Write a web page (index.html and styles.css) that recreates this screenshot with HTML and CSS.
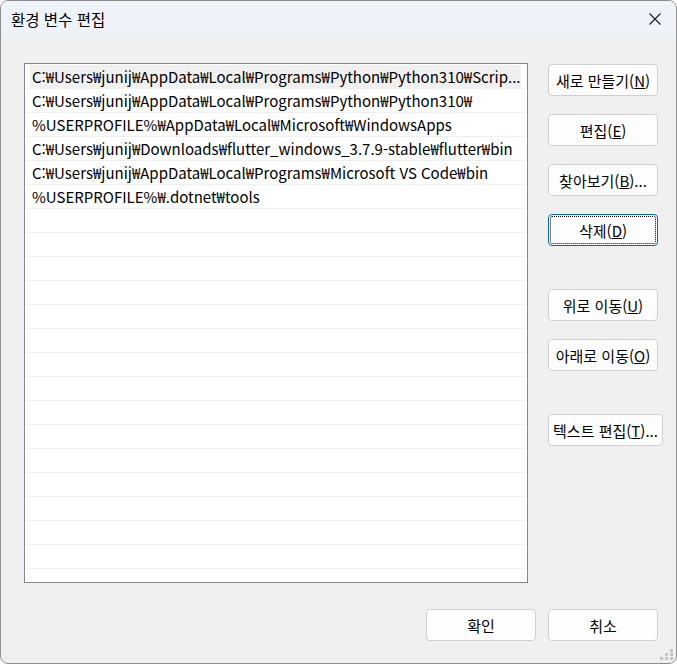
FILE: index.html
```html
<!DOCTYPE html>
<html lang="ko">
<head>
<meta charset="UTF-8">
<title>환경 변수 편집</title>
<link rel="stylesheet" href="styles.css">
</head>
<body>
<div class="window">
    <div class="titlebar">
        <span class="title">환경 변수 편집</span>
        <svg class="close" width="12" height="12" viewBox="0 0 12 12">
            <path d="M0.5 0.5 L11.5 11.5 M11.5 0.5 L0.5 11.5" stroke="#1a1a1a" stroke-width="1.1" fill="none"/>
        </svg>
    </div>

    <div class="content">
        <div class="main">
            <div class="list">
                <div class="row selected"><span class="cell">C:₩Users₩junij₩AppData₩Local₩Programs₩Python₩Python310₩Scrip...</span></div>
                <div class="row"><span class="cell">C:₩Users₩junij₩AppData₩Local₩Programs₩Python₩Python310₩</span></div>
                <div class="row"><span class="cell">%USERPROFILE%₩AppData₩Local₩Microsoft₩WindowsApps</span></div>
                <div class="row"><span class="cell">C:₩Users₩junij₩Downloads₩flutter_windows_3.7.9-stable₩flutter₩bin</span></div>
                <div class="row"><span class="cell">C:₩Users₩junij₩AppData₩Local₩Programs₩Microsoft VS Code₩bin</span></div>
                <div class="row"><span class="cell">%USERPROFILE%₩.dotnet₩tools</span></div>
                <div class="row"></div>
                <div class="row"></div>
                <div class="row"></div>
                <div class="row"></div>
                <div class="row"></div>
                <div class="row"></div>
                <div class="row"></div>
                <div class="row"></div>
                <div class="row"></div>
                <div class="row"></div>
                <div class="row"></div>
                <div class="row"></div>
                <div class="row"></div>
                <div class="row"></div>
                <div class="row"></div>
                <div class="row"></div>
            </div>

            <div class="side">
                <button class="btn">새로 만들기(<u>N</u>)</button>
                <button class="btn">편집(<u>E</u>)</button>
                <button class="btn">찾아보기(<u>B</u>)...</button>
                <button class="btn focused">삭제(<u>D</u>)</button>
                <button class="btn group">위로 이동(<u>U</u>)</button>
                <button class="btn">아래로 이동(<u>O</u>)</button>
                <button class="btn group wide">텍스트 편집(<u>T</u>)...</button>
            </div>
        </div>

        <div class="footer">
            <button class="btn">확인</button>
            <button class="btn">취소</button>
        </div>
    </div>

    <!-- 크기 조절 손잡이 -->
    <svg class="grip" width="14" height="12" viewBox="0 0 14 12">
        <rect x="10" y="0" width="3" height="3" fill="#c4c4c4"/>
        <rect x="5" y="4" width="3" height="3" fill="#c4c4c4"/>
        <rect x="10" y="4" width="3" height="3" fill="#c4c4c4"/>
        <rect x="0" y="8" width="3" height="3" fill="#c4c4c4"/>
        <rect x="5" y="8" width="3" height="3" fill="#c4c4c4"/>
        <rect x="10" y="8" width="3" height="3" fill="#c4c4c4"/>
    </svg>
</div>
</body>
</html>
```

FILE: styles.css
```css
body {
    margin: 0;
    background: #ffffff;
    font-family: "Noto Sans CJK KR", sans-serif;
    color: #000;
}

.window {
    position: relative;
    width: 677px;
    height: 664px;
    box-sizing: border-box;
    border: 1px solid #8e8e8e;
    border-radius: 8px;
    background: #f0f0f0;
    overflow: hidden;
}

.titlebar {
    height: 36px;
    background: #eef3f9;
    display: flex;
    align-items: center;
    justify-content: space-between;
    padding: 0 15px 0 10px;
}

.title {
    font-size: 15.5px;
}

.content {
    padding: 26px 18px 0 23px;
}

.main {
    display: flex;
    align-items: flex-start;
    gap: 20px;
}

.list {
    flex: none;
    width: 504px;
    height: 520px;
    box-sizing: border-box;
    border: 1px solid #82868e;
    background: #fff;
    padding: 1px;
    overflow: hidden;
}

.row {
    height: 23px;
    border-bottom: 1px solid #efefef;
    display: flex;
}

.cell {
    flex: 1;
    min-width: 0;
    margin: 0 5px 0 4px;
    padding-left: 2px;
    font-size: 15px;
    line-height: 23px;
    white-space: nowrap;
}

.row.selected .cell {
    background: #f0f0f0;
}

.side {
    flex: none;
    display: flex;
    flex-direction: column;
    align-items: flex-start;
    padding-top: 1px;
}

.btn {
    width: 110px;
    height: 32px;
    box-sizing: border-box;
    margin: 0 0 18px 0;
    padding: 0;
    border: 1px solid #d0d0d0;
    border-radius: 4px;
    background: #fdfdfd;
    font-family: inherit;
    font-size: 15px;
    color: #000;
    white-space: nowrap;
}

.btn.group {
    margin-top: 25px;
}

.btn.wide {
    width: 115px;
}

.btn.focused {
    border-color: #0067c0;
    outline: 1px dotted #000;
    outline-offset: -3px;
}

.footer {
    display: flex;
    justify-content: flex-end;
    gap: 12px;
    margin-top: 26px;
}

.footer .btn {
    margin: 0;
}

.grip {
    position: absolute;
    right: 2px;
    bottom: 2px;
}
```
